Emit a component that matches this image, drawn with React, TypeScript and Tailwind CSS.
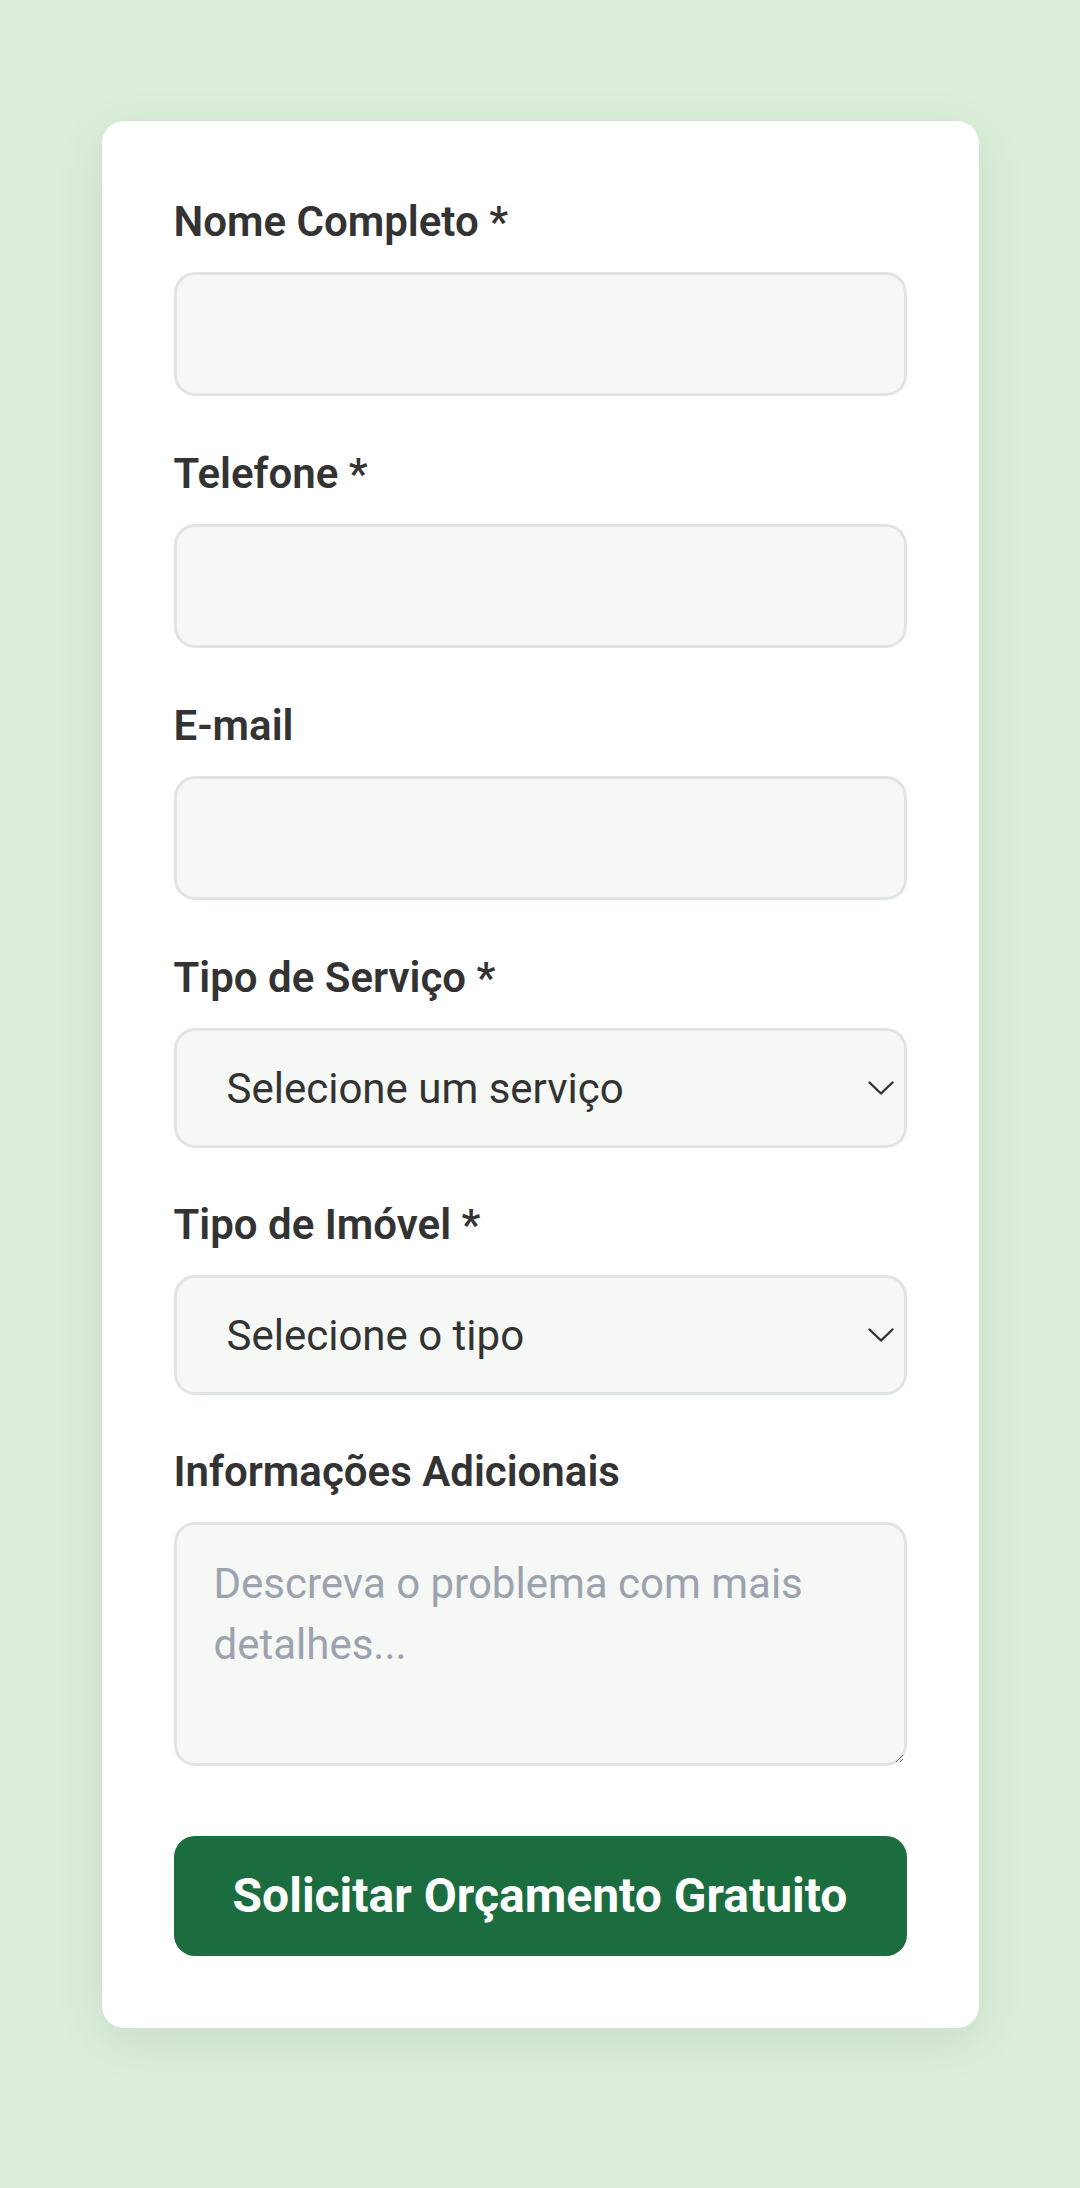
import type { ReactNode } from "react";

const fieldBox =
  "block w-full rounded-[21px] border-[3px] border-[#e1e5e1] bg-[#f5f8f5] text-[#333333] outline-none";

function Chevron() {
  return (
    <svg
      width="26"
      height="14"
      viewBox="0 0 26 14"
      fill="none"
      aria-hidden
      className="pointer-events-none absolute right-[13px] top-1/2 -translate-y-1/2"
    >
      <path
        d="M1.5 1.5L13 12.5 24.5 1.5"
        stroke="#333333"
        strokeWidth="2.4"
        strokeLinecap="round"
        strokeLinejoin="round"
      />
    </svg>
  );
}

function Field({
  label,
  className,
  children,
}: {
  label: string;
  className: string;
  children: ReactNode;
}) {
  return (
    <div className={className}>
      <label className="mb-[22px] block text-[42px] font-semibold leading-[57px] text-[#333333]">
        {label}
      </label>
      {children}
    </div>
  );
}

function SelectField({ label, placeholder }: { label: string; placeholder: string }) {
  return (
    <Field label={label} className="mb-[48px]">
      <div className="relative">
        <select
          defaultValue=""
          className={`${fieldBox} h-[120px] appearance-none pl-[50px] pr-[60px] text-[42px]`}
        >
          <option value="" disabled>
            {placeholder}
          </option>
        </select>
        <Chevron />
      </div>
    </Field>
  );
}

export default function App() {
  return (
    <div
      className="min-h-screen bg-[#dbeedb] pb-[160px] pt-[121px]"
      style={{ fontFamily: "Roboto, 'Noto Sans', sans-serif" }}
    >
      <form
        onSubmit={(e) => e.preventDefault()}
        className="mx-auto w-[877px] rounded-[22px] bg-white px-[72px] py-[72px] shadow-[0_12px_48px_rgba(30,70,40,0.10)]"
      >
        <Field label="Nome Completo *" className="mb-[49px]">
          <input type="text" className={`${fieldBox} h-[124px] px-[42px] text-[42px]`} />
        </Field>

        <Field label="Telefone *" className="mb-[49px]">
          <input type="tel" className={`${fieldBox} h-[124px] px-[42px] text-[42px]`} />
        </Field>

        <Field label="E-mail" className="mb-[49px]">
          <input type="email" className={`${fieldBox} h-[124px] px-[42px] text-[42px]`} />
        </Field>

        <SelectField label="Tipo de Serviço *" placeholder="Selecione um serviço" />
        <SelectField label="Tipo de Imóvel *" placeholder="Selecione o tipo" />

        <Field label="Informações Adicionais" className="mb-[70px]">
          <textarea
            placeholder="Descreva o problema com mais detalhes..."
            className={`${fieldBox} h-[244px] px-[37px] py-[28px] text-[42px] leading-[61px] placeholder:text-[#9ca3af]`}
          />
        </Field>

        <button
          type="submit"
          className="block h-[120px] w-full rounded-[21px] bg-[#1b6c3f] text-[48px] font-bold text-white"
        >
          Solicitar Orçamento Gratuito
        </button>
      </form>
    </div>
  );
}
